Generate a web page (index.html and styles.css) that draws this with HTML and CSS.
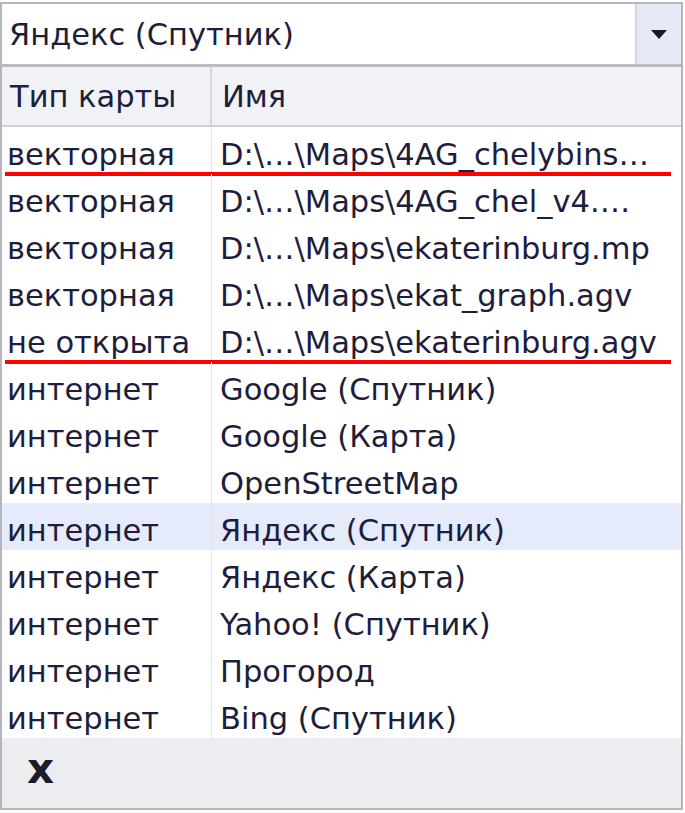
FILE: index.html
```html
<!DOCTYPE html>
<html lang="ru">
<head>
<meta charset="utf-8">
<title>Карты</title>
<link rel="stylesheet" href="styles.css">
</head>
<body>
<div class="frame">
  <div class="combo">
    <div class="combo-text">Яндекс (Спутник)</div>
    <div class="combo-btn">
      <svg width="16" height="9" viewBox="0 0 16 9"><path d="M0 0H16L8 9Z" fill="#1a1a2a"/></svg>
    </div>
  </div>
  <div class="header">
    <div class="c1">Тип карты</div>
    <div class="c2">Имя</div>
  </div>
  <div class="rows">
    <div class="row marked"><div class="c1">векторная</div><div class="c2">D:\…\Maps\4AG_chelybins…</div><span class="redline"></span></div>
    <div class="row"><div class="c1">векторная</div><div class="c2">D:\…\Maps\4AG_chel_v4.…</div></div>
    <div class="row"><div class="c1">векторная</div><div class="c2">D:\…\Maps\ekaterinburg.mp</div></div>
    <div class="row"><div class="c1">векторная</div><div class="c2">D:\…\Maps\ekat_graph.agv</div></div>
    <div class="row marked"><div class="c1">не открыта</div><div class="c2">D:\…\Maps\ekaterinburg.agv</div><span class="redline"></span></div>
    <div class="row"><div class="c1">интернет</div><div class="c2">Google (Спутник)</div></div>
    <div class="row"><div class="c1">интернет</div><div class="c2">Google (Карта)</div></div>
    <div class="row"><div class="c1">интернет</div><div class="c2">OpenStreetMap</div></div>
    <div class="row selected"><div class="c1">интернет</div><div class="c2">Яндекс (Спутник)</div></div>
    <div class="row"><div class="c1">интернет</div><div class="c2">Яндекс (Карта)</div></div>
    <div class="row"><div class="c1">интернет</div><div class="c2">Yahoo! (Спутник)</div></div>
    <div class="row"><div class="c1">интернет</div><div class="c2">Прогород</div></div>
    <div class="row"><div class="c1">интернет</div><div class="c2">Bing (Спутник)</div></div>
  </div>
  <div class="footer">
    <span class="close">x</span>
  </div>
</div>
</body>
</html>
```
FILE: styles.css
```css
html, body {
  margin: 0;
  padding: 0;
  background: #ffffff;
}
body {
  font-family: "DejaVu Sans", sans-serif;
  font-size: 30.5px;
  color: #1e1e3c;
}
.frame {
  margin-top: 2px;
  width: 679px;
  border: 2px solid #b4b6bc;
  background: #ffffff;
}
.combo {
  display: flex;
  height: 60px;
  border-bottom: 3px solid #b9bbc1;
}
.combo-text {
  flex: 1;
  display: flex;
  align-items: center;
  padding-left: 7px;
  white-space: nowrap;
}
.combo-btn {
  width: 44px;
  background: #e6eaf7;
  border-left: 2px solid #d2d5de;
  display: flex;
  align-items: center;
  justify-content: center;
}
.header {
  display: flex;
  height: 58px;
  background: #f1f2f5;
  border-bottom: 2px solid #cfd1d6;
}
.header .c1 {
  width: 210px;
  box-sizing: border-box;
  border-right: 2px solid #d4d6db;
  display: flex;
  align-items: center;
  padding-left: 8px;
  white-space: nowrap;
}
.header .c2 {
  display: flex;
  align-items: center;
  padding-left: 10px;
}
.rows {
  display: flex;
  flex-direction: column;
}
.row {
  position: relative;
  display: flex;
  height: 47px;
}
.row .c1 {
  width: 210px;
  box-sizing: border-box;
  padding: 7px 0 0 5px;
  border-right: 1px solid #e4e5e9;
  display: flex;
  align-items: center;
  white-space: nowrap;
  overflow: hidden;
}
.row .c2 {
  flex: 1;
  padding: 7px 0 0 8px;
  display: flex;
  align-items: center;
  white-space: nowrap;
  overflow: hidden;
}
.row.selected {
  background: #e5ebfa;
}
.redline {
  position: absolute;
  left: 3px;
  right: 10px;
  bottom: -2px;
  height: 4px;
  background: #ff0000;
}
.footer {
  height: 70px;
  background: #ecedf1;
  display: flex;
  align-items: center;
  padding-left: 25px;
}
.close {
  font-family: "DejaVu Sans", sans-serif;
  font-weight: bold;
  font-size: 42px;
  color: #1c1c2c;
  line-height: 1;
  padding-bottom: 8px;
}
```
